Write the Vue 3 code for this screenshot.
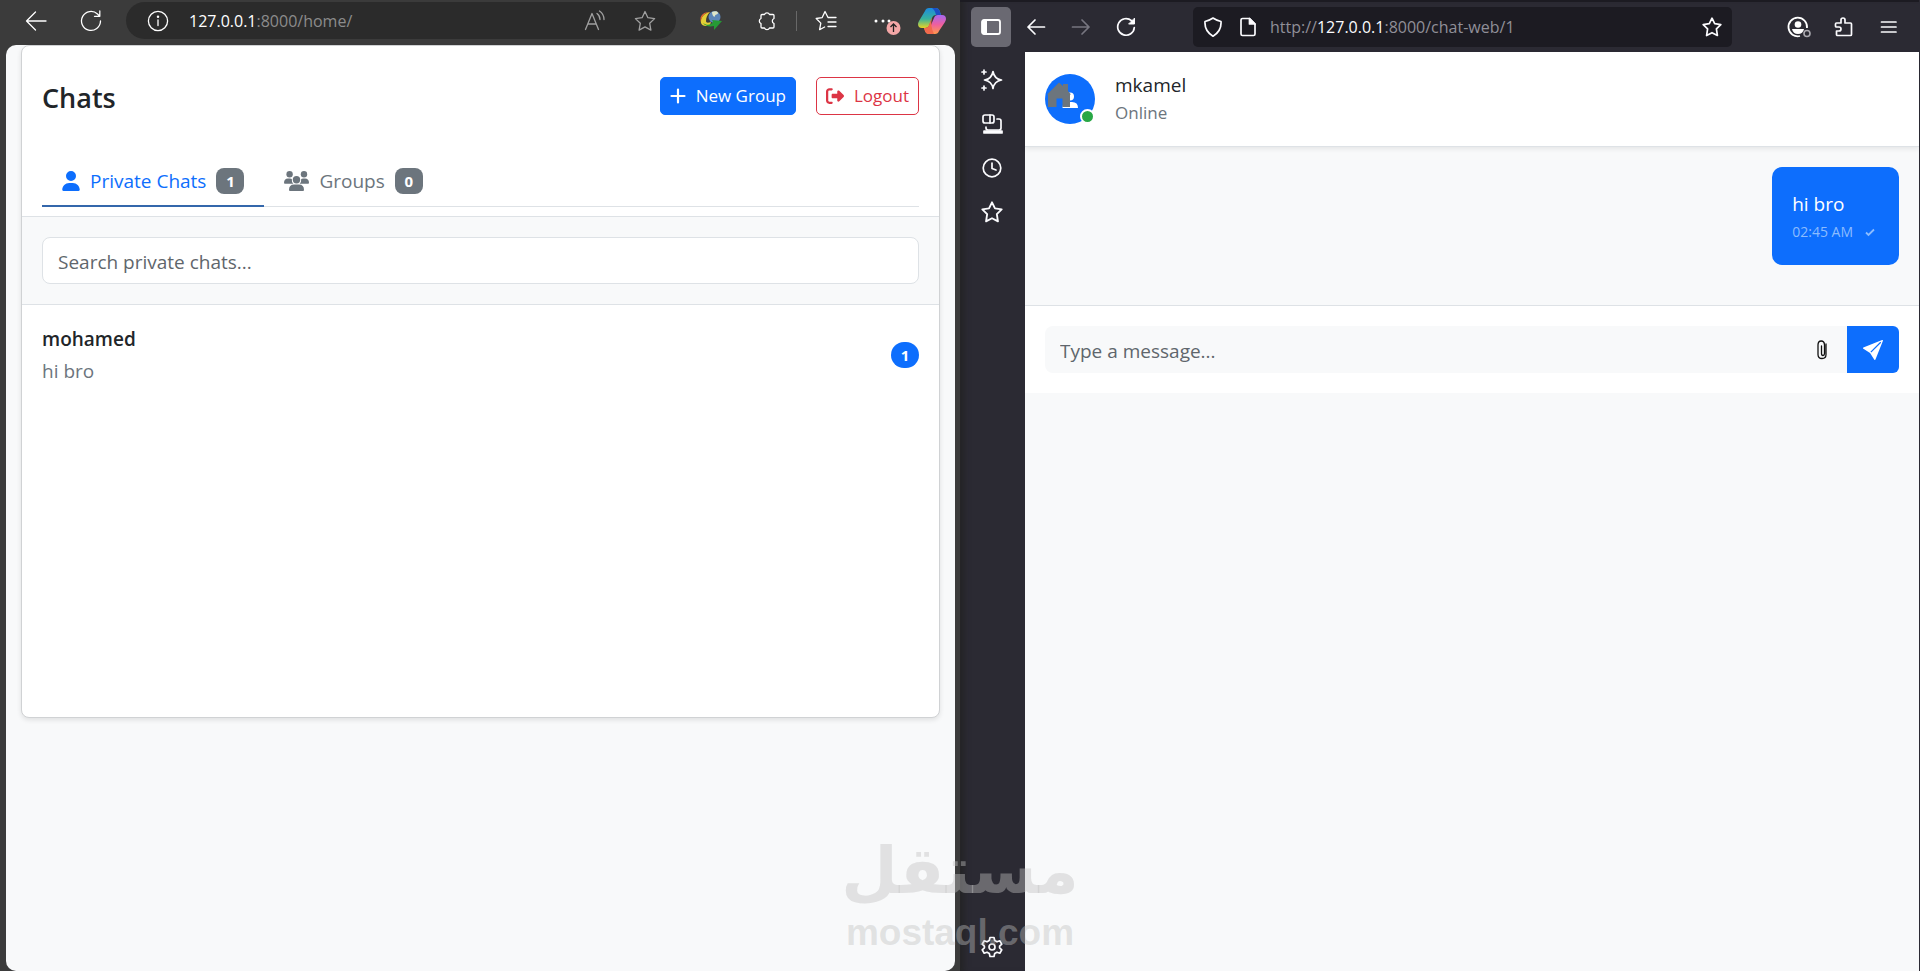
<script setup>
import { ref, computed } from 'vue'

const activeTab = ref('private')
const search = ref('')
const draft = ref('')

const tabs = ref([
  { id: 'private', label: 'Private Chats', count: 1 },
  { id: 'groups', label: 'Groups', count: 0 },
])

const chats = ref([
  { id: 1, name: 'mohamed', lastMessage: 'hi bro', unread: 1 },
])

const messages = ref([
  { id: 1, text: 'hi bro', time: '02:45 AM' },
])

const visibleChats = computed(() => {
  if (activeTab.value !== 'private') return []
  return chats.value.filter((chat) => chat.name.includes(search.value.toLowerCase()))
})

function sendMessage() {
  if (!draft.value.trim()) return
  const time = new Date().toLocaleTimeString('en-US', { hour: '2-digit', minute: '2-digit' })
  messages.value.push({ id: messages.value.length + 1, text: draft.value, time })
  draft.value = ''
}
</script>

<template>
  <div class="desktop">
    <!-- Edge window -->
    <section class="window edge">
      <header class="edge-bar">
        <button class="bar-btn" aria-label="Back">
          <svg width="22" height="22" viewBox="0 0 22 22" class="line"><path d="M21 11H1.500M10.500 2 1.500 11l9 9" /></svg>
        </button>
        <button class="bar-btn" aria-label="Refresh">
          <svg width="22" height="22" viewBox="0 0 22 22" class="line"><path d="M20.500 11a9.500 9.500 0 1 1-3-7l2 2M19.800 1v5.300h-5.300" /></svg>
        </button>
        <div class="edge-address">
          <button class="info-btn" aria-label="Site information">
            <svg width="22" height="22" viewBox="0 0 22 22" class="line"><circle cx="11" cy="11" r="9.600" /><path d="M11 10v5.500" /><circle cx="11" cy="6.800" r=".6" /></svg>
          </button>
          <span class="edge-url"><b>127.0.0.1</b>:8000/home/</span>
          <button class="bar-btn dim" aria-label="Read aloud">
            <svg width="22" height="22" viewBox="0 0 22 22" class="line"><path d="m1.500 19.500 6.500-16 6.500 16M4 14h8M13 3.500c2 1.500 3 3.500 3 6M15.500 1c3 2 4.500 5 4.500 8.500" /></svg>
          </button>
          <button class="bar-btn dim" aria-label="Favorite">
            <svg width="22" height="22" viewBox="0 0 22 22" class="line"><path d="m11 1.500 2.900 6.200 6.700.9-4.900 4.700 1.200 6.800L11 16.900l-5.900 3.200 1.200-6.800L1.400 8.600l6.700-.9z" /></svg>
          </button>
        </div>
        <div class="edge-tools">
          <button class="bar-btn" aria-label="Download manager">
            <svg width="22" height="22" viewBox="0 0 22 22">
              <circle cx="14.500" cy="7" r="6" fill="#5c86b8" />
              <path d="M12 2c3-1.500 6-1 6 1s-3 1-3 3-3 0-3-4z" fill="#dfe6c8" />
              <path d="M10 2C4 3 0 8 1 13c1 3 5 4 9 2l1-3c-3 1-5 1-5-1 0-3 1-6 4-9z" fill="#e3cf35" />
              <path d="M10 2C4 3 1 7 1 12c-2-6 2-10 9-10z" fill="#e96a2d" />
              <path d="M3 13c4 3 8 2 10-1l-1-2 10 1-8 9v-4c-5 1-9 0-11-3z" fill="#269a35" />
            </svg>
          </button>
          <button class="bar-btn" aria-label="Extensions">
            <svg width="22" height="22" viewBox="0 0 22 22" class="line"><path d="M6 4.500h2.500a2.700 2.700 0 0 1 5 0H17q1 0 1 1v3a2.700 2.700 0 0 0 0 5V17q0 1-1 1h-3.500a2.700 2.700 0 0 1-5 0H6q-1 0-1-1v-3.500a2.700 2.700 0 0 1 0-5v-3q0-1 1-1z" /></svg>
          </button>
          <span class="divider"></span>
          <button class="bar-btn" aria-label="Favorites list">
            <svg width="22" height="22" viewBox="0 0 22 22" class="line"><path d="M13 7.500 10 1.500 7.200 7.600l-6 .9 4.600 4.600-1.200 6.600 5-2.700M13 7.500h8M13 12h8M13 16.500h8" /></svg>
          </button>
          <button class="bar-btn more" aria-label="Settings and more">
            <svg width="32" height="28" viewBox="0 0 32 28">
              <g fill="#fff"><circle cx="5" cy="10" r="1.500" /><circle cx="12" cy="10" r="1.500" /><circle cx="18" cy="10" r="1.500" /></g>
              <circle cx="22.500" cy="17" r="7" fill="#f3a6a6" />
              <path d="M22.500 21v-8M19.500 16l3-3 3 3" fill="none" stroke="#222" stroke-width="1.300" />
            </svg>
          </button>
          <button class="bar-btn" aria-label="Copilot">
            <svg width="28" height="28" viewBox="0 0 28 28">
              <defs>
                <linearGradient id="coolRibbon" x1="0" y1="0" x2="0" y2="1"><stop offset="0" stop-color="#1c8be0" /><stop offset=".55" stop-color="#38b29b" /><stop offset="1" stop-color="#e8d524" /></linearGradient>
                <linearGradient id="warmRibbon" x1="0" y1="0" x2="0" y2="1"><stop offset="0" stop-color="#a568f0" /><stop offset=".5" stop-color="#ee5f9f" /><stop offset="1" stop-color="#ff9a4a" /></linearGradient>
              </defs>
              <path d="M7 4q1-3 4-3h7q3 0 4 4l1 3h-5q-3 0-4 3l-3 8q-1 2-4 2H4q-4 0-4-4 0-1 1-3z" fill="url(#coolRibbon)" />
              <path d="M17 1q4 0 5 4l1 3h-5q-1-5-4-7z" fill="#1c4fc4" />
              <path d="M21 24q-1 3-4 3h-6q-3 0-4-3l-1-3h3q3 0 4-3l3-7q1-3 4-3h4q4 0 4 4 0 1-1 3z" fill="url(#warmRibbon)" />
              <path d="M11 18 14 10q-2 10 2 17h-5q-3 0-4-3l-1-3h1q3 0 4-3z" fill="#f2694c" />
            </svg>
          </button>
        </div>
      </header>

      <main class="home-page">
        <div class="card">
          <div class="card-top">
            <div class="title-row">
              <h1>Chats</h1>
              <div class="actions">
                <button class="btn btn-primary">
                  <svg width="16" height="16" viewBox="0 0 16 16" class="plus"><path d="M8 1.500v13M1.500 8h13" /></svg>
                  New Group
                </button>
                <button class="btn btn-outline">
                  <svg width="18" height="18" viewBox="0 0 512 512" fill="currentColor"><path d="M377.900 105.900 500.700 228.700c7.200 7.200 11.300 17.100 11.300 27.300s-4.100 20.100-11.300 27.300L377.900 406.100c-6.400 6.400-15 9.900-24 9.900-18.700 0-33.900-15.200-33.900-33.900V320H192c-17.700 0-32-14.300-32-32v-64c0-17.700 14.300-32 32-32h128v-62.100c0-18.700 15.200-33.900 33.900-33.900 9 0 17.600 3.600 24 9.900zM160 96H96c-17.700 0-32 14.300-32 32v256c0 17.700 14.300 32 32 32h64c17.700 0 32 14.300 32 32s-14.300 32-32 32H96c-53 0-96-43-96-96V128C0 75 43 32 96 32h64c17.700 0 32 14.300 32 32s-14.300 32-32 32z" /></svg>
                  Logout
                </button>
              </div>
            </div>
            <nav class="tabs">
              <button
                v-for="tab in tabs"
                :key="tab.id"
                :class="['tab', { active: activeTab === tab.id }]"
                @click="activeTab = tab.id"
              >
                <svg v-if="tab.id === 'private'" width="18" height="20" viewBox="0 0 448 512" fill="currentColor"><path d="M224 256A128 128 0 1 0 224 0a128 128 0 1 0 0 256zm-45.700 48C79.800 304 0 383.800 0 482.300 0 498.700 13.300 512 29.700 512h388.600c16.400 0 29.700-13.300 29.700-29.700C448 383.800 368.200 304 269.700 304h-91.400z" /></svg>
                <svg v-else width="25" height="20" viewBox="0 0 25 20" fill="currentColor">
                  <circle cx="5.600" cy="3.200" r="3.200" /><circle cx="20" cy="3.200" r="3.200" /><circle cx="12.500" cy="8.700" r="3.700" />
                  <path d="M0 12q0-4.500 4-4.500h2q1 0 1.800.5-.3 2.700 1.500 4.800H1q-1 0-1-.8zM25 12q0-4.500-4-4.500h-2q-1 0-1.800.5.300 2.700-1.500 4.800H24q1 0 1-.8zM5 19q0-5.500 5-5.500h5q5 0 5 5.500 0 1-1 1H6q-1 0-1-1z" />
                </svg>
                <span>{{ tab.label }}</span>
                <span class="badge">{{ tab.count }}</span>
              </button>
            </nav>
          </div>

          <div class="search-box">
            <input v-model="search" type="text" class="search-field" placeholder="Search private chats..." aria-label="Search private chats" />
          </div>

          <ul class="chat-list">
            <li v-for="chat in visibleChats" :key="chat.id" class="chat-item">
              <div>
                <h2>{{ chat.name }}</h2>
                <p>{{ chat.lastMessage }}</p>
              </div>
              <span v-if="chat.unread" class="badge unread">{{ chat.unread }}</span>
            </li>
          </ul>
        </div>
      </main>
    </section>

    <!-- Firefox window -->
    <section class="window firefox">
      <header class="fox-bar">
        <button class="fox-btn pressed" aria-label="Sidebar">
          <svg width="20" height="16" viewBox="0 0 20 16"><rect x="1" y="1" width="18" height="14" rx="2" fill="none" stroke="#fff" stroke-width="1.800" /><path d="M1 2h5v12H1z" fill="#fff" /></svg>
        </button>
        <button class="fox-btn" aria-label="Back">
          <svg width="20" height="20" viewBox="0 0 20 20" class="line bold"><path d="M18.500 10H2M9 3l-7 7 7 7" /></svg>
        </button>
        <button class="fox-btn faded" aria-label="Forward">
          <svg width="20" height="20" viewBox="0 0 20 20" class="line bold"><path d="M1.500 10H18M11 3l7 7-7 7" /></svg>
        </button>
        <button class="fox-btn" aria-label="Reload">
          <svg width="20" height="20" viewBox="0 0 20 20" class="line bold"><path d="M18.300 10.500A8.300 8.300 0 1 1 15.500 3.700L17 5" /><path d="M18.500 1.500V7H13z" fill="#fff" stroke-width="1" /></svg>
        </button>
        <div class="fox-address">
          <svg width="20" height="20" viewBox="0 0 20 20" class="line bold"><path d="M10 1q4 2.700 8 3.500.7 9.500-8 14.700Q1.300 14 2 4.500 6 3.700 10 1z" /></svg>
          <svg width="20" height="20" viewBox="0 0 20 20" class="line bold"><path d="M4.500 1.500h7l5.500 5.500v10q0 1.500-1.500 1.500h-11Q3 18.500 3 17V3q0-1.500 1.500-1.500z" /><path d="M11.500 1.500V7H17z" fill="#fff" /></svg>
          <span class="fox-url">http://<b>127.0.0.1</b>:8000/chat-web/1</span>
          <button class="star-btn" aria-label="Bookmark">
            <svg width="20" height="20" viewBox="0 0 20 20" class="line bold"><path d="m10 1.200 2.700 5.500 6.100.9-4.400 4.300 1 6.600L10 15.700l-5.400 2.800 1-6.600L1.200 7.600l6.100-.9z" /></svg>
          </button>
        </div>
        <div class="fox-tools">
          <button class="fox-btn" aria-label="Account">
            <svg width="24" height="22" viewBox="0 0 24 22">
              <path d="M20 12a9.300 9.300 0 1 0-7 8" fill="none" stroke="#fff" stroke-width="1.800" />
              <circle cx="11" cy="8.500" r="3.300" fill="#fff" /><path d="M5 13h12q-1 5-6 5t-6-5z" fill="#fff" />
              <circle cx="20" cy="17.500" r="3" fill="none" stroke="#aaa9af" stroke-width="1.600" />
            </svg>
          </button>
          <button class="fox-btn" aria-label="Extensions">
            <svg width="20" height="20" viewBox="0 0 20 20" class="line bold"><path d="M2.500 6H7V3q0-2 2-2t2 2v3h5.500q1 0 1 1v10.500q0 1-1 1h-13q-1 0-1-1V14H5q2 0 2-2t-2-2H2.500q-1 0-1-1V7q0-1 1-1z" /></svg>
          </button>
          <button class="fox-btn" aria-label="Menu">
            <svg width="18" height="18" viewBox="0 0 18 18" class="line bold"><path d="M1.500 4h14.500M1.500 9h14.500M1.500 14h14.500" /></svg>
          </button>
        </div>
      </header>

      <div class="fox-body">
        <aside class="fox-side">
          <button class="side-btn" aria-label="AI chatbot">
            <svg width="22" height="22" viewBox="0 0 22 22" class="line bold"><path d="M12 2.500q1.200 7.300 8.500 8.500-7.300 1.200-8.500 8.500Q10.800 12.200 3.500 11 10.800 9.800 12 2.500zM3 1v4M1 3h4M3 17v4M1 19h4" /></svg>
          </button>
          <button class="side-btn" aria-label="Synced tabs">
            <svg width="22" height="22" viewBox="0 0 22 22" class="line bold"><rect x="2" y="2" width="11" height="8" rx="2" /><path d="M9 2v8M16 6h2q2 0 2 2v7q0 2-2 2H7q-2 0-2-2v-1" /><path d="M3 18h18v2H3z" fill="#fff" /></svg>
          </button>
          <button class="side-btn" aria-label="History">
            <svg width="22" height="22" viewBox="0 0 22 22" class="line bold"><circle cx="11" cy="11" r="8.800" /><path d="M11 6v5.500l4 1.500" /></svg>
          </button>
          <button class="side-btn" aria-label="Bookmarks">
            <svg width="22" height="22" viewBox="0 0 20 20" class="line bold"><path d="m10 1.200 2.700 5.500 6.100.9-4.400 4.300 1 6.600L10 15.700l-5.400 2.800 1-6.600L1.200 7.600l6.100-.9z" /></svg>
          </button>
          <button class="side-btn settings" aria-label="Customize sidebar">
            <svg width="22" height="22" viewBox="0 0 22 22" class="line bold"><path d="M9 1.500h4l.7 3 2.300 1.300 2.800-1 2 3.400-2.200 2v1.600l2.200 2-2 3.400-2.800-1-2.300 1.300-.7 3H9l-.7-3L6 16.200l-2.800 1-2-3.400 2.200-2v-1.600l-2.200-2 2-3.400 2.800 1 2.300-1.300z" /><circle cx="11" cy="11" r="3" /></svg>
          </button>
        </aside>

        <main class="chat-page">
          <div class="chat-header">
            <div class="avatar">
              <svg width="50" height="50" viewBox="0 0 50 50">
                <circle cx="25" cy="25" r="25" fill="#0d6efd" />
                <circle cx="25" cy="22.500" r="4" fill="#fff" /><path d="M17.500 34q0-6 6-6H27q6 0 6 6z" fill="#fff" />
                <path d="m2 20.500 12-12 4 3.500v-2h5v7l3 3.500h-1V33h-7.500v-8.500h-6V33H3V20.500z" fill="#6c757d" />
              </svg>
              <span class="status"></span>
            </div>
            <div>
              <h2>mkamel</h2>
              <p>Online</p>
            </div>
          </div>

          <div class="messages">
            <div v-for="message in messages" :key="message.id" class="bubble">
              <p>{{ message.text }}</p>
              <div class="meta">
                <span>{{ message.time }}</span>
                <svg width="10" height="10" viewBox="0 0 10 10"><path d="m1 5.500 2.500 2.500L9 2.500" /></svg>
              </div>
            </div>
          </div>

          <form class="composer" @submit.prevent="sendMessage">
            <div class="message-box">
              <input v-model="draft" type="text" placeholder="Type a message..." aria-label="Message" />
              <button type="button" class="attach" aria-label="Attach file">
                <svg width="10" height="20" viewBox="0 0 10 20">
                  <path d="M9 4v10.500q0 4-4 4t-4-4V5q0-4 3.200-4t3.300 4v8.500q0 2-1.500 2t-1.500-2V6" fill="none" stroke="#111" stroke-width="1.300" stroke-linecap="round" />
                </svg>
              </button>
            </div>
            <button type="submit" class="send" aria-label="Send">
              <svg width="20" height="20" viewBox="0 0 16 16" fill="#fff"><path d="M15.964.686a.5.500 0 0 0-.65-.65L.767 5.855l-.453.18a.5.500 0 0 0-.082.887l.411.262 4.995 3.178 3.178 4.995.262.412a.5.500 0 0 0 .886-.083zm-1.833 1.890L6.637 10.070l-.215-.338a.5.500 0 0 0-.154-.154l-.338-.215 7.494-7.494 1.178-.471z" /></svg>
            </button>
          </form>
        </main>
      </div>
    </section>

    <div class="watermark">
      <span class="mark-ar" lang="ar">مستقل</span>
      <span class="mark-en">mostaql.com</span>
    </div>
  </div>
</template>

<style>
body {
  margin: 0;
  background: #3b3b3b;
}
</style>

<style scoped>
* {
  box-sizing: border-box;
}

.desktop {
  position: relative;
  display: grid;
  grid-template-columns: minmax(0, 1fr) minmax(0, 1fr);
  min-height: 100vh;
  overflow: hidden;
  font-family: 'Open Sans', 'Noto Sans', sans-serif;
  font-size: 19px;
  line-height: 30px;
  color: #212529;
}

h1,
h2,
p,
ul {
  margin: 0;
  padding: 0;
}

button,
input {
  font: inherit;
  color: inherit;
  border: none;
  background: none;
  padding: 0;
}

button {
  cursor: pointer;
}

svg {
  display: block;
  flex: none;
}

.line {
  fill: none;
  stroke: currentColor;
  stroke-width: 1.3;
  stroke-linecap: round;
  stroke-linejoin: round;
}

.line.bold {
  stroke-width: 1.7;
}

.window {
  display: flex;
  flex-direction: column;
}

/* Edge */
.edge {
  background: #3b3b3b;
  padding: 0 5px 0 6px;
}

.edge-bar {
  display: flex;
  align-items: center;
  gap: 15px;
  height: 45px;
  padding: 0 3px 4px 10px;
  color: #fff;
}

.bar-btn {
  display: flex;
  align-items: center;
  justify-content: center;
  width: 40px;
  height: 36px;
}

.edge-address {
  flex: 1;
  display: flex;
  align-items: center;
  gap: 10px;
  height: 37px;
  padding: 0 11px 0 21px;
  background: #2b2b2b;
  border-radius: 19px;
}

.info-btn {
  margin-right: 10px;
}

.edge-url {
  flex: 1;
  font-size: 17px;
  color: #8c8c8c;
}

.edge-url b {
  font-weight: 400;
  color: #fff;
}

.dim {
  color: #a0a0a0;
}

.edge-tools {
  display: flex;
  align-items: center;
  gap: 9px;
}

.edge-tools .bar-btn:first-child {
  margin-right: 7px;
}

.divider {
  width: 1px;
  height: 20px;
  background: #686868;
}

.more {
  width: 48px;
  padding-top: 8px;
  justify-content: flex-end;
}

.home-page {
  flex: 1;
  padding: 0 15px;
  background: #f8f9fa;
  border-radius: 10px;
}

.card {
  min-height: 673px;
  background: #fff;
  border: 1px solid #d0d2d4;
  border-radius: 8px;
  box-shadow: 0 2px 5px rgba(0, 0, 0, 0.1);
}

.card-top {
  padding: 30px 20px 9px;
  border-bottom: 1px solid #dee2e6;
}

.title-row {
  display: flex;
  align-items: center;
  justify-content: space-between;
  margin-bottom: 43px;
}

h1 {
  padding-top: 4px;
  font-size: 27px;
  font-weight: 600;
  line-height: 36px;
}

.actions {
  display: flex;
  gap: 20px;
}

.btn {
  display: flex;
  align-items: center;
  gap: 10px;
  height: 38px;
  padding: 0 9px;
  border: 1px solid;
  border-radius: 5px;
  font-size: 17px;
}

.btn-primary {
  background: #0d6efd;
  border-color: #0d6efd;
  color: #fff;
}

.btn-outline {
  border-color: #dc3545;
  color: #dc3545;
}

.plus {
  stroke: #fff;
  stroke-width: 2.2;
  stroke-linecap: round;
}

.tabs {
  display: flex;
  border-bottom: 1px solid #dee2e6;
}

.tab {
  display: flex;
  align-items: center;
  gap: 10px;
  height: 48px;
  margin-bottom: -1px;
  padding: 0 20px 2px;
  border-bottom: 2px solid transparent;
  color: #6c757d;
}

.tab.active {
  color: #0d6efd;
  border-bottom-color: #3467ab;
}

.badge {
  width: 28px;
  height: 26px;
  border-radius: 8px;
  background: #6c757d;
  color: #fff;
  font-size: 15px;
  font-weight: 700;
  line-height: 26px;
  text-align: center;
}

.search-box {
  padding: 20px;
  background: #f8f9fa;
  border-bottom: 1px solid #dee2e6;
}

.search-field {
  display: block;
  width: 100%;
  height: 47px;
  padding: 2px 15px 0;
  background: #fff;
  border: 1px solid #dee2e6;
  border-radius: 8px;
}

input::placeholder {
  color: #5f666c;
  opacity: 1;
}

.chat-list {
  list-style: none;
}

.chat-item {
  display: flex;
  align-items: center;
  justify-content: space-between;
  padding: 18px 20px;
}

.chat-item h2 {
  font-size: 19px;
  font-weight: 600;
  line-height: 32px;
}

.chat-item p {
  color: #6c757d;
  line-height: 32px;
}

.unread {
  border-radius: 13px;
  background: #0d6efd;
}

/* Firefox */
.firefox {
  background: #2b2a33;
  border-right: 1px solid #2b2a33;
  box-shadow: inset 8px 0 6px -4px #242426;
}

.fox-bar {
  display: flex;
  align-items: center;
  gap: 5px;
  height: 52px;
  padding: 0 10px 0 11px;
  border-top: 2px solid #1c1b22;
  color: #fbfbfe;
}

.fox-btn,
.side-btn {
  display: flex;
  align-items: center;
  justify-content: center;
  width: 40px;
  height: 40px;
}

.pressed {
  background: #6a6972;
  border-radius: 5px;
}

.faded {
  color: #777680;
}

.fox-address {
  flex: 1;
  display: flex;
  align-items: center;
  gap: 15px;
  height: 40px;
  margin: 0 42px;
  padding: 0 10px;
  background: #1c1b22;
  border-radius: 5px;
}

.fox-url {
  flex: 1;
  margin-left: -3px;
  font-size: 17px;
  color: #908f98;
}

.edge-url,
.fox-url {
  font-size: 16px;
}

.fox-url b {
  font-weight: 400;
  color: #fbfbfe;
}

.fox-tools {
  display: flex;
  gap: 5px;
}

.fox-body {
  flex: 1;
  display: flex;
}

.fox-side {
  display: flex;
  flex-direction: column;
  gap: 4px;
  width: 65px;
  padding: 8px 12px 4px;
  color: #fbfbfe;
}

.settings {
  margin-top: auto;
}

.chat-page {
  flex: 1;
  background: #f8f9fa;
}

.chat-header {
  display: flex;
  align-items: center;
  gap: 20px;
  padding: 20px;
  background: #fff;
  border-bottom: 1px solid #dee2e6;
  box-shadow: 0 2px 5px rgba(0, 0, 0, 0.08);
}

.chat-header h2 {
  font-size: 19px;
  font-weight: 400;
  line-height: 27px;
}

.chat-header p {
  font-size: 17px;
  line-height: 27px;
  color: #6c757d;
}

.avatar {
  position: relative;
}

.status {
  position: absolute;
  right: 0;
  bottom: 0;
  width: 15px;
  height: 15px;
  background: #28a745;
  border: 2px solid #fff;
  border-radius: 50%;
}

.messages {
  display: flex;
  flex-direction: column;
  align-items: flex-end;
  gap: 20px;
  padding: 20px 20px 40px;
}

.bubble {
  padding: 22px 20px 20px;
  background: #0d6efd;
  border-radius: 10px;
  color: #fff;
}

.meta {
  display: flex;
  align-items: center;
  gap: 12px;
  padding-right: 4px;
  font-size: 14px;
  line-height: 26px;
  color: #8cbcfe;
}

.meta path {
  fill: none;
  stroke: currentColor;
  stroke-width: 1.8;
}

.composer {
  display: flex;
  padding: 20px;
  background: #fff;
  border-top: 1px solid #dee2e6;
}

.message-box {
  flex: 1;
  display: flex;
  height: 47px;
  background: #f8f9fa;
  border-radius: 8px 0 0 8px;
}

.message-box input {
  flex: 1;
  padding: 2px 15px 0;
}

.attach {
  padding: 0 20px;
}

.send {
  display: flex;
  align-items: center;
  justify-content: center;
  width: 52px;
  background: #0d6efd;
  border-radius: 0 6px 6px 0;
}

/* Brand mark laid over both windows */
.watermark {
  position: absolute;
  left: 0;
  right: 0;
  bottom: 16px;
  display: flex;
  flex-direction: column;
  align-items: center;
  color: rgba(193, 193, 193, 0.42);
  font-weight: 700;
  pointer-events: none;
}

.mark-ar {
  font-family: 'DejaVu Sans', sans-serif;
  font-size: 65px;
  line-height: 80px;
}

.mark-en {
  font-family: 'Liberation Sans', sans-serif;
  font-size: 37px;
  line-height: 44px;
}
</style>
